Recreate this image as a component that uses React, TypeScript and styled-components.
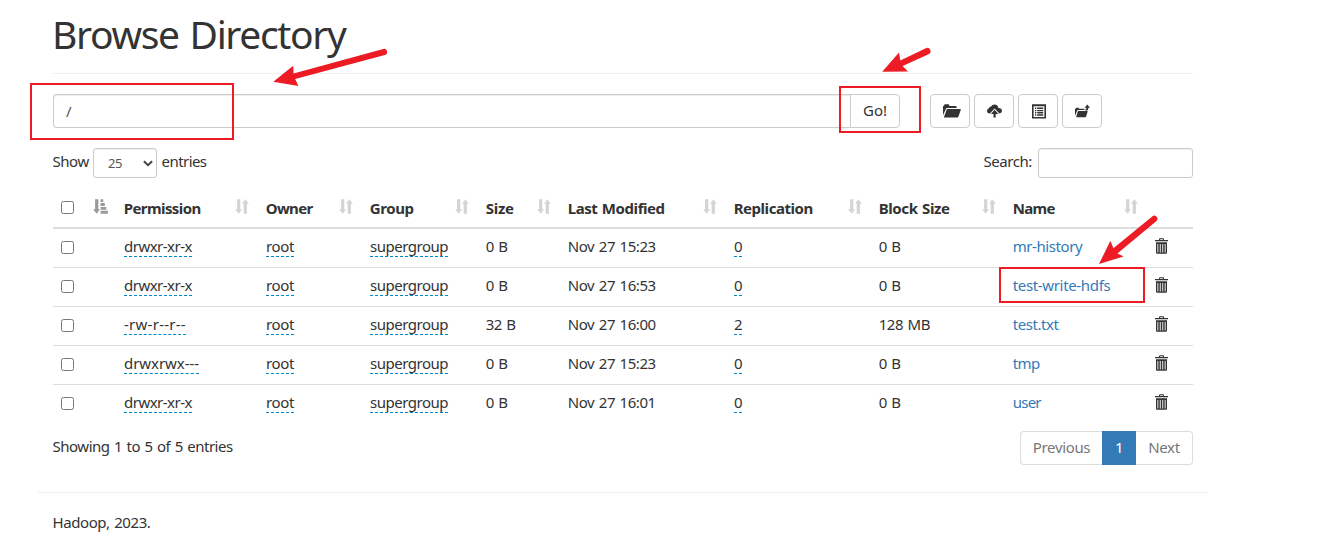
import React from 'react';
import styled, { createGlobalStyle } from 'styled-components';

const GlobalStyle = createGlobalStyle`
  * { box-sizing: border-box; }
  body {
    margin: 0;
    background: #fff;
    color: #333;
    font-family: 'Noto Sans', 'Open Sans', sans-serif;
    font-size: 15px;
    line-height: 20px;
    letter-spacing: -0.36px;
    word-spacing: 1px;
  }
`;

const Page = styled.div`
  position: relative;
  width: 1320px;
  height: 541px;
  overflow: hidden;
`;

const Container = styled.main`
  width: 1170px;
  margin-left: 38px;
  padding: 0 15px;
`;

const Title = styled.h1`
  margin: 0 0 20px;
  height: 74px;
  padding-top: 12px;
  border-bottom: 1px solid #eee;
  font-size: 39px;
  font-weight: 400;
  line-height: 44px;
  letter-spacing: -1.35px;
  word-spacing: 2px;
  text-indent: -1px;
`;

const PathBar = styled.div`
  display: flex;
  height: 34px;
`;

const PathInput = styled.input`
  width: 798px;
  padding: 0 12px 1px;
  border: 1px solid #ccc;
  border-right: 0;
  border-radius: 4px 0 0 4px;
  box-shadow: inset 0 1px 1px rgba(0, 0, 0, 0.075);
  color: #555;
  font: inherit;
  outline: none;
`;

const GoButton = styled.button`
  width: 50px;
  margin-right: 30px;
  padding: 0 0 2px;
  border: 1px solid #ccc;
  border-radius: 0 4px 4px 0;
  margin-left: -1px;
  background: #fff;
  color: #333;
  font: inherit;
  letter-spacing: 0;
`;

const ToolButtons = styled.div`
  display: flex;
  gap: 4px;
`;

const ToolButton = styled.button<{ $shift?: number }>`
  display: flex;
  align-items: center;
  justify-content: center;
  width: 40px;
  height: 34px;
  padding: 0 0 0 ${(p) => p.$shift ?? 0}px;
  border: 1px solid #ccc;
  border-radius: 4px;
  background: #fff;
  color: #333;
`;

const Controls = styled.div`
  display: flex;
  align-items: center;
  height: 30px;
  margin-top: 20px;
`;

const LengthSelect = styled.div`
  display: flex;
  align-items: center;
  justify-content: space-between;
  width: 64px;
  height: 30px;
  margin: 0 5px 0 4px;
  padding: 0 3px 0 14px;
  border: 1px solid #ccc;
  border-radius: 3px;
  box-shadow: inset 0 1px 1px rgba(0, 0, 0, 0.075);
  color: #555;
  font-size: 13px;
`;

const ControlText = styled.span<{ $width: number; $tracking?: number }>`
  width: ${(p) => p.$width}px;
  margin-top: -4px;
  letter-spacing: ${(p) => p.$tracking ?? -0.36}px;
  text-indent: -0.5px;
  white-space: nowrap;
`;

const SearchGroup = styled.div`
  display: flex;
  align-items: center;
  margin-left: auto;
`;

const SearchInput = styled.input`
  width: 155px;
  height: 30px;
  margin-left: 5px;
  border: 1px solid #ccc;
  border-radius: 3px;
  box-shadow: inset 0 1px 1px rgba(0, 0, 0, 0.075);
  outline: none;
`;

const Table = styled.table`
  width: 1140px;
  margin-top: 10px;
  table-layout: fixed;
  border-spacing: 0;
`;

const HeadCell = styled.th<{ $tracking?: number }>`
  height: 41px;
  padding: 0 8px;
  border-bottom: 2px solid #ddd;
  text-align: left;
  font-weight: 700;
  letter-spacing: ${(p) => p.$tracking ?? -0.4}px;
  white-space: nowrap;
`;

const HeadInner = styled.div`
  display: flex;
  align-items: center;
  justify-content: space-between;
  height: 39px;
  text-indent: -0.3px;
`;

const SortSlot = styled.span<{ $start?: boolean }>`
  display: flex;
  margin: -3px 0.8px 0 ${(p) => (p.$start ? '-1px' : '0')};
`;

const Row = styled.tr`
  & + & td { border-top: 1px solid #ddd; }
  &:first-child td { height: 38px; }
`;

const Cell = styled.td<{ $tracking?: number }>`
  height: 39px;
  padding: 0 8px;
  vertical-align: top;
  line-height: 34px;
  letter-spacing: ${(p) => p.$tracking ?? -0.3}px;
  text-indent: -0.3px;
  white-space: nowrap;
`;

const Editable = styled.span<{ $tracking: number }>`
  display: inline-block;
  height: 21px;
  margin: 7px 0 0 0.3px;
  border-bottom: 1px dashed #08c;
  line-height: 20px;
  letter-spacing: ${(p) => p.$tracking}px;
  text-indent: 0;
  vertical-align: top;
`;

const FileLink = styled.a<{ $tracking: number }>`
  color: #337ab7;
  letter-spacing: ${(p) => p.$tracking}px;
  text-decoration: none;
`;

const Checkbox = styled.input.attrs({ type: 'checkbox' })`
  display: block;
  width: 13px;
  height: 13px;
  margin: 0;
`;

const RowCheckbox = styled(Checkbox)`
  margin-top: 12px;
`;

const TrashSlot = styled.span`
  display: block;
  height: 16px;
  margin-top: 9px;
  line-height: 0;
  text-indent: 0;
`;

const TableFooter = styled.div`
  display: flex;
  justify-content: space-between;
  height: 34px;
  margin-top: 8px;
`;

const Info = styled.span`
  padding-top: 5px;
  letter-spacing: -0.48px;
  text-indent: -0.5px;
`;

const Pagination = styled.nav`
  display: flex;
  width: 173px;
`;

const PageItem = styled.a<{ $active?: boolean; $width: number; $side?: 'left' | 'right' }>`
  width: ${(p) => p.$width}px;
  border: 1px solid ${(p) => (p.$active ? '#337ab7' : '#ddd')};
  ${(p) => p.$side === 'left' && 'border-right: 0; border-radius: 4px 0 0 4px;'}
  ${(p) => p.$side === 'right' && 'border-left: 0; border-radius: 0 4px 4px 0;'}
  background: ${(p) => (p.$active ? '#337ab7' : '#fff')};
  color: ${(p) => (p.$active ? '#fff' : '#777')};
  line-height: 30px;
  text-align: center;
`;

const Footer = styled.footer`
  width: 1170px;
  margin: 27px 0 0 38px;
  padding: 19px 15px 0;
  border-top: 1px solid #eee;
  letter-spacing: -0.42px;
  text-indent: -0.5px;
`;

const Annotations = styled.svg`
  position: absolute;
  inset: 0;
  pointer-events: none;
`;

const FolderOpenIcon = () => (
  <svg width="18" height="14" viewBox="0 0 18 14" fill="currentColor">
    <path d="M0 11.2V2.2L1.2 1.6V1.2Q1.2.3 2 .3H5.4Q6.1.3 6.3 1.2L6.5 2H12.6Q13.6 2 13.6 3V4H4.2Q3.3 4 3 4.8Z" />
    <path d="M4.5 5H17.2Q18.1 5 17.8 5.8L15.4 12.8Q15.1 13.6 14.3 13.6H1.4Q.8 13.6 1 12.9L3.6 5.7Q3.9 5 4.5 5Z" />
  </svg>
);

const CloudUploadIcon = () => (
  <svg width="15" height="14" viewBox="0 0 15 14" fill="currentColor">
    <path d="M2.7 9.4Q0 9.2 0 6.9Q0 4.9 2 4.3Q2.2 2.4 4.1 2.4Q5.2.5 7.5.5Q10.9.8 11.4 4Q15 4.2 15 7Q14.8 9.3 12.4 9.4L7.6 4.5 2.9 9.4Z" />
    <path d="M7.6 5.7 11.4 9.9H8.7V13.6H6.5V9.9H3.9Z" />
  </svg>
);

const ListIcon = () => (
  <svg width="14" height="15" viewBox="0 0 14 15" fill="currentColor">
    <path fillRule="evenodd" d="M0 .3H14V14.5H0ZM1.6 2.3V13H12.4V2.3Z" />
    <path d="M3 3.6H4.3V5H3ZM5.2 3.6H11.2V5H5.2ZM3 5.9H4.3V7.2H3ZM5.2 5.9H11.2V7.2H5.2ZM3 8.1H4.3V9.4H3ZM5.2 8.1H11.2V9.4H5.2ZM3 10.3H4.3V11.7H3ZM5.2 10.3H11.2V11.7H5.2Z" />
  </svg>
);

const FolderUpIcon = () => (
  <svg width="15" height="14" viewBox="0 0 15 14" fill="currentColor">
    <path d="M0 12V5L.8 4.4Q.8 3.8 1.5 3.8H3.5L4.1 4.7H9.4V6H3.1Q2.4 6 2.2 6.6Z" />
    <path d="M3.4 7H12.1Q12.9 7 12.6 7.7L11.1 12.6Q10.9 13.2 10.2 13.2H1.1L2.8 7.5Q3 7 3.4 7Z" />
    <path d="M12.3.6 15 3.8H13.2V5Q13.2 6.7 11.6 6.6H10.2V5.2H11.3V3.8H9.5Z" />
  </svg>
);

const TrashIcon = () => (
  <svg width="13" height="16" viewBox="0 0 13 16" fill="currentColor">
    <path fillRule="evenodd" d="M0 2H4V1.2Q4 .2 5 .2H8Q9 .2 9 1.2V2H13V3.2H0ZM5.1 1.3V2H7.9V1.3Z" />
    <path fillRule="evenodd" d="M1 4.2H12V14.6Q12 15.8 11 15.8H2Q1 15.8 1 14.6ZM2.4 6V14.5H3.3V6ZM4.8 6V14.5H5.7V6ZM7.3 6V14.5H8.2V6ZM9.7 6V14.5H10.6V6Z" />
  </svg>
);

const SortIcon = () => (
  <svg width="14" height="15" viewBox="0 0 14 15" fill="#d4d4d4">
    <path d="M2.1.2H5.3V10.2H7L3.7 14.8.1 10.2H2.1Z" />
    <path d="M10.3.2 13.9 4.8H11.9V14.8H8.7V4.8H7Z" />
  </svg>
);

const SortAscIcon = () => (
  <svg width="15" height="15" viewBox="0 0 15 15" fill="#999">
    <path d="M2.1.2H5.3V10.2H7L3.7 14.8.1 10.2H2.1Z" />
    <path d="M7.6.2H10.2V3H7.6ZM7.6 4H11.8V6.9H7.6ZM7.6 7.9H13.3V10.8H7.6ZM7.6 11.8H14.9V14.7H7.6Z" />
  </svg>
);

const ChevronIcon = () => (
  <svg width="10" height="7" viewBox="0 0 10 7" fill="none" stroke="#444" strokeWidth="2">
    <path d="M.9 1.2 5 5.1 9.1 1.2" />
  </svg>
);

const columnWidths = [33, 30, 142, 104, 116, 82, 166, 145, 134, 142, 46];

const headings = [
  { label: 'Permission', tracking: -0.58 },
  { label: 'Owner', tracking: -0.65 },
  { label: 'Group', tracking: -0.37 },
  { label: 'Size', tracking: -0.28 },
  { label: 'Last Modified', tracking: -0.43 },
  { label: 'Replication', tracking: -0.46 },
  { label: 'Block Size', tracking: -0.39 },
  { label: 'Name', tracking: -0.69 },
];

const files = [
  { perm: 'drwxr-xr-x', pt: -0.51, size: '0 B', date: 'Nov 27 15:23', rep: '0', block: '0 B', name: 'mr-history', nt: -0.42 },
  { perm: 'drwxr-xr-x', pt: -0.51, size: '0 B', date: 'Nov 27 16:53', rep: '0', block: '0 B', name: 'test-write-hdfs', nt: -0.34 },
  { perm: '-rw-r--r--', pt: 0.26, size: '32 B', date: 'Nov 27 16:00', rep: '2', block: '128 MB', name: 'test.txt', nt: -0.45 },
  { perm: 'drwxrwx---', pt: -0.06, size: '0 B', date: 'Nov 27 15:23', rep: '0', block: '0 B', name: 'tmp', nt: -0.55 },
  { perm: 'drwxr-xr-x', pt: -0.51, size: '0 B', date: 'Nov 27 16:01', rep: '0', block: '0 B', name: 'user', nt: -0.75 },
];

export default function App() {
  return (
    <Page>
      <GlobalStyle />
      <Container>
        <Title>Browse Directory</Title>
        <PathBar>
          <PathInput defaultValue="/" />
          <GoButton>Go!</GoButton>
          <ToolButtons>
            <ToolButton aria-label="Open folder" $shift={3}><FolderOpenIcon /></ToolButton>
            <ToolButton aria-label="Upload"><CloudUploadIcon /></ToolButton>
            <ToolButton aria-label="List" $shift={2}><ListIcon /></ToolButton>
            <ToolButton aria-label="Parent folder"><FolderUpIcon /></ToolButton>
          </ToolButtons>
        </PathBar>
        <Controls>
          <ControlText $width={36} $tracking={-0.45}>Show</ControlText>
          <LengthSelect>25<ChevronIcon /></LengthSelect>
          <ControlText $width={46} $tracking={-0.55}>entries</ControlText>
          <SearchGroup>
            <ControlText $width={49} $tracking={-0.45}>Search:</ControlText>
            <SearchInput aria-label="Search" />
          </SearchGroup>
        </Controls>
        <Table>
          <colgroup>
            {columnWidths.map((w, i) => <col key={i} width={w} />)}
          </colgroup>
          <thead>
            <tr>
              <HeadCell><Checkbox /></HeadCell>
              <HeadCell>
                <HeadInner><SortSlot $start><SortAscIcon /></SortSlot></HeadInner>
              </HeadCell>
              {headings.map((h) => (
                <HeadCell key={h.label} $tracking={h.tracking}>
                  <HeadInner>{h.label}<SortSlot><SortIcon /></SortSlot></HeadInner>
                </HeadCell>
              ))}
              <HeadCell />
            </tr>
          </thead>
          <tbody>
            {files.map((f) => (
              <Row key={f.name}>
                <Cell><RowCheckbox /></Cell>
                <Cell />
                <Cell><Editable $tracking={f.pt}>{f.perm}</Editable></Cell>
                <Cell><Editable $tracking={-0.37}>root</Editable></Cell>
                <Cell><Editable $tracking={-0.49}>supergroup</Editable></Cell>
                <Cell $tracking={-0.5}>{f.size}</Cell>
                <Cell $tracking={-0.42}>{f.date}</Cell>
                <Cell><Editable $tracking={-0.58}>{f.rep}</Editable></Cell>
                <Cell $tracking={-0.45}>{f.block}</Cell>
                <Cell><FileLink $tracking={f.nt}>{f.name}</FileLink></Cell>
                <Cell><TrashSlot><TrashIcon /></TrashSlot></Cell>
              </Row>
            ))}
          </tbody>
        </Table>
        <TableFooter>
          <Info>Showing 1 to 5 of 5 entries</Info>
          <Pagination>
            <PageItem $width={82} $side="left">Previous</PageItem>
            <PageItem $width={34} $active>1</PageItem>
            <PageItem $width={57} $side="right">Next</PageItem>
          </Pagination>
        </TableFooter>
      </Container>
      <Footer>Hadoop, 2023.</Footer>
      <Annotations width="1320" height="541" viewBox="0 0 1320 541">
        <g fill="none" stroke="#ed1c24" strokeWidth="2">
          <rect x="31" y="84" width="202" height="55" />
          <rect x="840" y="87" width="80" height="45" />
          <rect x="1000" y="268" width="144" height="34" />
        </g>
        <g fill="#ed1c24">
          <path d="M273.3 81.7 293.2 65.8 293.6 73.4 383.2 49A3.1 3.1 0 0 1 384.8 55L295.2 79 298.4 86Z" />
          <path d="M882.2 71.8 899 52.6 900.3 60.6 925.8 48.2A3.2 3.2 0 0 1 928.6 54.2L902.6 66 908 71.4Z" />
          <path d="M1099 264 1110.4 240.8 1113.4 248.3 1152.2 216.4A3.1 3.1 0 0 1 1156.2 221.2L1117.4 253.4 1123.6 256.4Z" />
        </g>
      </Annotations>
    </Page>
  );
}
